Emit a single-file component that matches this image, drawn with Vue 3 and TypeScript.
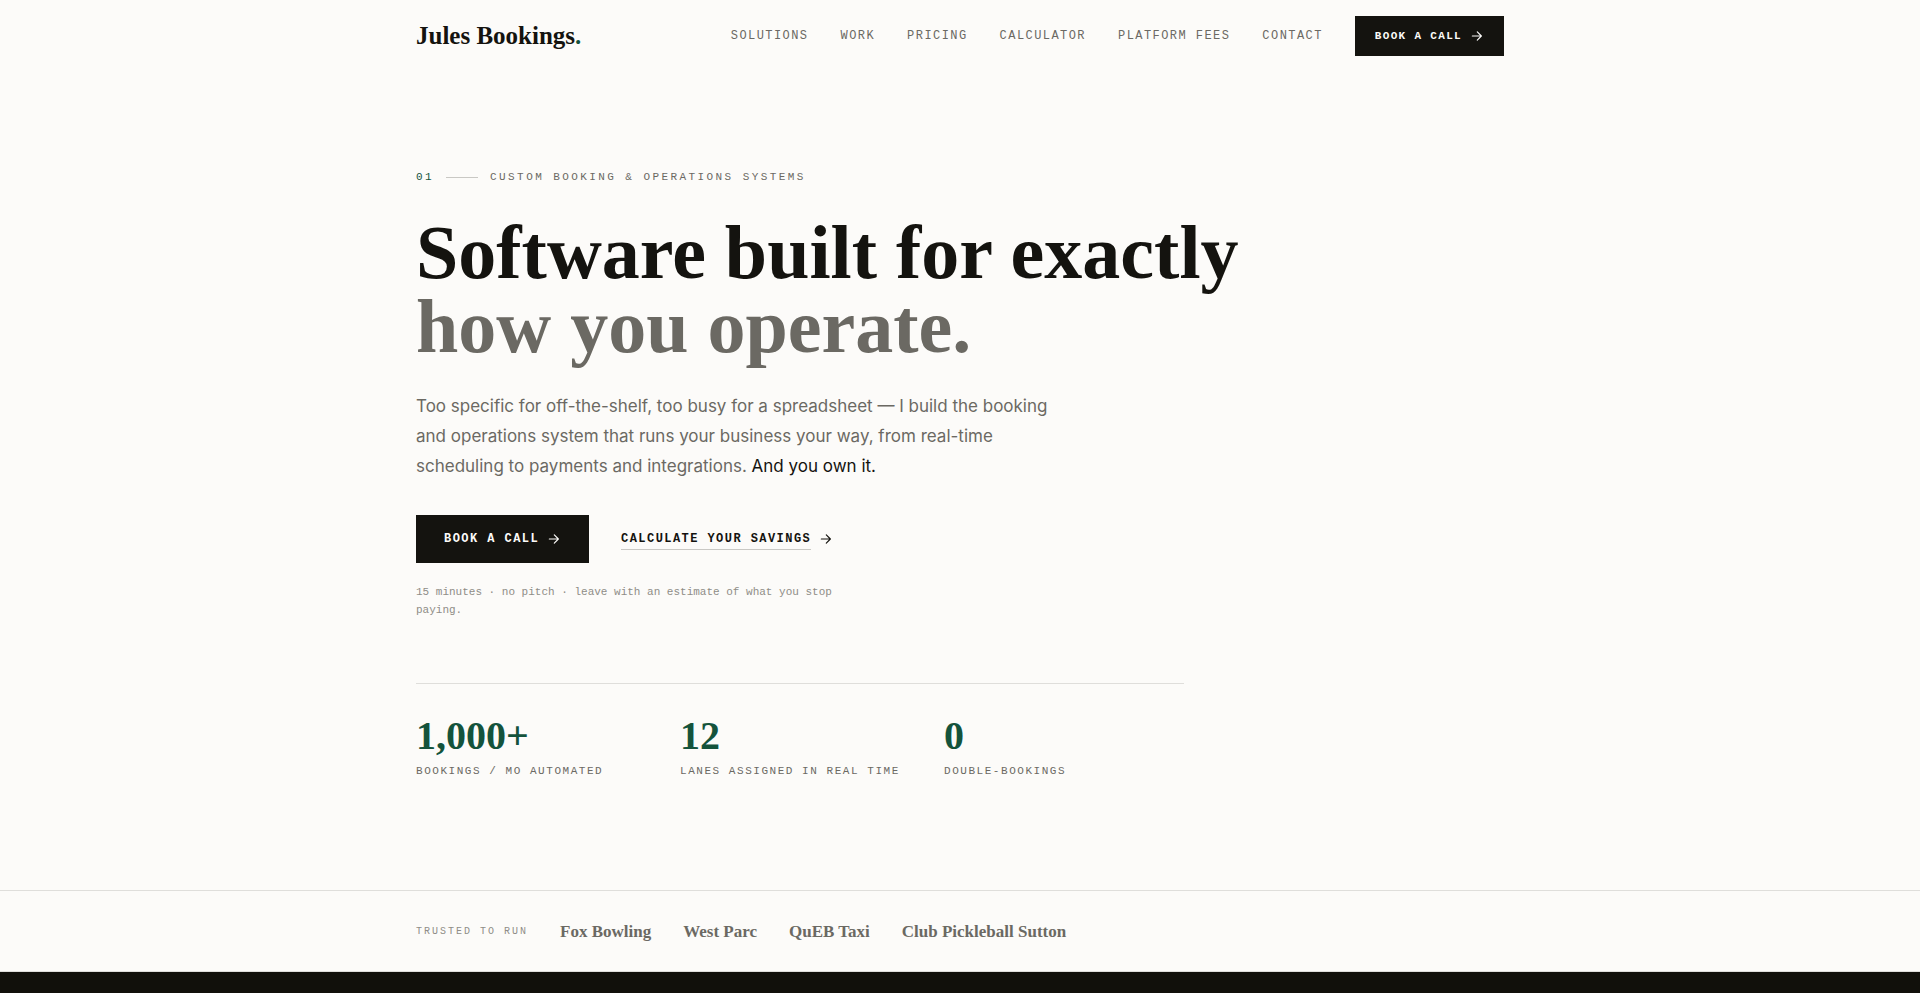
<script setup lang="ts">
interface Stat {
  value: string
  label: string
}

const links: string[] = ['Solutions', 'Work', 'Pricing', 'Calculator', 'Platform Fees', 'Contact']

const stats: Stat[] = [
  { value: '1,000+', label: 'Bookings / mo automated' },
  { value: '12', label: 'Lanes assigned in real time' },
  { value: '0', label: 'Double-bookings' },
]

const clients: string[] = ['Fox Bowling', 'West Parc', 'QuEB Taxi', 'Club Pickleball Sutton']

const slug = (text: string): string => '#' + text.toLowerCase().replace(/\s+/g, '-')
</script>

<template>
  <div class="page">
    <header class="header">
      <div class="container header-row">
        <a class="logo" href="#top">Jules Bookings<span class="dot">.</span></a>
        <nav class="nav" aria-label="Main">
          <a v-for="link in links" :key="link" class="nav-link" :href="slug(link)">{{ link }}</a>
          <a class="button button-small" href="#book">
            Book a call
            <svg class="arrow" viewBox="0 0 24 24" aria-hidden="true"><path d="M4 12h15.500M12.500 5l7 7-7 7" /></svg>
          </a>
        </nav>
      </div>
    </header>

    <main>
      <section class="container hero">
        <p class="eyebrow">
          <span class="number">01</span>
          <span class="dash"></span>
          <span>Custom booking &amp; operations systems</span>
        </p>
        <h1 class="title">Software built for exactly<br /><span class="muted">how you operate.</span></h1>
        <p class="lead">
          Too specific for off-the-shelf, too busy for a spreadsheet — I build the booking and operations system that
          runs your business your way, from real-time scheduling to payments and integrations.
          <span class="strong">And you own it.</span>
        </p>
        <div class="actions">
          <a class="button" href="#book">
            Book a call
            <svg class="arrow" viewBox="0 0 24 24" aria-hidden="true"><path d="M4 12h15.500M12.500 5l7 7-7 7" /></svg>
          </a>
          <a class="text-link" href="#calculator">
            <span class="underlined">Calculate your savings</span>
            <svg class="arrow" viewBox="0 0 24 24" aria-hidden="true"><path d="M4 12h15.500M12.500 5l7 7-7 7" /></svg>
          </a>
        </div>
        <p class="note">15 minutes · no pitch · leave with an estimate of what you stop paying.</p>
        <dl class="stats">
          <div v-for="stat in stats" :key="stat.label" class="stat">
            <dt class="stat-label">{{ stat.label }}</dt>
            <dd class="stat-value">{{ stat.value }}</dd>
          </div>
        </dl>
      </section>

      <section class="trusted">
        <div class="container trusted-row">
          <span class="trusted-label">Trusted to run</span>
          <span v-for="client in clients" :key="client" class="client">{{ client }}</span>
        </div>
      </section>

      <section class="dark"></section>
    </main>
  </div>
</template>

<style>
body {
  margin: 0;
  background: #fcfbf9;
}
</style>

<style scoped>
.page {
  display: flex;
  flex-direction: column;
  height: 100vh;
  overflow: hidden;
  background: #fcfbf9;
  color: #14130f;
  font-family: Inter, "Liberation Sans", sans-serif;
}

main {
  display: flex;
  flex: 1;
  flex-direction: column;
}

.container {
  box-sizing: border-box;
  width: 100%;
  max-width: 1152px;
  margin: 0 auto;
  padding: 0 32px;
}

.header-row {
  display: flex;
  align-items: center;
  justify-content: space-between;
  height: 72px;
}

.logo {
  color: #14130f;
  font: 700 25px/32px "Liberation Serif", serif;
  text-decoration: none;
}

.dot {
  color: #14533c;
}

.nav {
  display: flex;
  align-items: center;
  gap: 32px;
}

.nav-link {
  color: #6b6963;
  font: 400 12px/16px "Liberation Mono", monospace;
  letter-spacing: 0.12em;
  text-decoration: none;
  text-transform: uppercase;
}

.button,
.text-link {
  display: inline-flex;
  align-items: center;
  gap: 8px;
  font: 700 12px/16px "Liberation Mono", monospace;
  letter-spacing: 0.12em;
  text-decoration: none;
  text-transform: uppercase;
}

.button {
  padding: 16px 28px;
  background: #14130f;
  color: #fcfbf9;
}

.button-small {
  padding: 12px 20px;
  font-size: 11px;
}

.text-link {
  color: #14130f;
}

.underlined {
  padding: 2px 0;
  border-bottom: 1px solid #c9c8c4;
}

.arrow {
  width: 14px;
  height: 14px;
  fill: none;
  stroke: currentColor;
  stroke-width: 2;
  stroke-linecap: round;
  stroke-linejoin: round;
}

.hero {
  padding-top: 96px;
  padding-bottom: 110px;
}

.eyebrow {
  display: flex;
  align-items: center;
  gap: 12px;
  margin: 0;
  color: #6b6963;
  font: 400 11px/18px "Liberation Mono", monospace;
  letter-spacing: 0.22em;
  text-transform: uppercase;
}

.number {
  color: #14533c;
}

.dash {
  width: 32px;
  height: 1px;
  background: #c9c8c4;
}

.title {
  margin: 29px 0 0;
  font: 700 76px/74px "Liberation Serif", serif;
}

.muted {
  color: #6b6963;
}

.lead {
  max-width: 656px;
  margin: 28px 0 0;
  color: #6b6963;
  font-size: 17px;
  line-height: 30px;
}

.strong {
  color: #14130f;
}

.actions {
  display: flex;
  align-items: center;
  gap: 32px;
  margin-top: 34px;
}

.note {
  max-width: 448px;
  margin: 20px 0 0;
  color: #8f8d87;
  font: 400 11px/18px "Liberation Mono", monospace;
}

.stats {
  display: grid;
  grid-template-columns: repeat(3, 1fr);
  gap: 24px;
  max-width: 768px;
  margin: 64px 0 0;
  padding-top: 32px;
  border-top: 1px solid #dfdedb;
}

.stat {
  display: flex;
  flex-direction: column-reverse;
  gap: 6px;
}

.stat-value {
  margin: 0;
  color: #14533c;
  font: 700 40px/40px "Liberation Serif", serif;
}

.stat-label {
  color: #6b6963;
  font: 400 11px/18px "Liberation Mono", monospace;
  letter-spacing: 0.14em;
  text-transform: uppercase;
}

.trusted {
  border-top: 1px solid #dfdedb;
  border-bottom: 1px solid #dfdedb;
}

.trusted-row {
  display: flex;
  flex-wrap: wrap;
  align-items: center;
  gap: 32px;
  padding-top: 29px;
  padding-bottom: 27px;
}

.trusted-label {
  color: #8f8d87;
  font: 400 10px/16px "Liberation Mono", monospace;
  letter-spacing: 0.2em;
  text-transform: uppercase;
}

.client {
  color: #6b6963;
  font: 700 17px/24px "Liberation Serif", serif;
}

.dark {
  flex: 1;
  background: #11100b;
}
</style>
